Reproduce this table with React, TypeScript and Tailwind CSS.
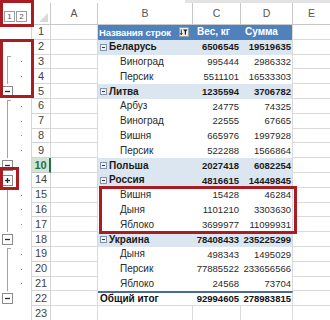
import React from 'react';

type Kind = 'header' | 'group' | 'detail' | 'total' | 'empty';
type OL = 'start' | 'mid' | 'minus' | 'plus' | null;
type Row = { n: number; kind: Kind; label?: string; c?: string; d?: string; ol: OL; dot: boolean };

const rows: Row[] = [
  { n: 1, kind: 'header', label: 'Названия строк', c: 'Вес, кг', d: 'Сумма', ol: null, dot: false },
  { n: 2, kind: 'group', label: 'Беларусь', c: '6506545', d: '19519635', ol: null, dot: false },
  { n: 3, kind: 'detail', label: 'Виноград', c: '995444', d: '2986332', ol: 'start', dot: true },
  { n: 4, kind: 'detail', label: 'Персик', c: '5511101', d: '16533303', ol: 'mid', dot: true },
  { n: 5, kind: 'group', label: 'Литва', c: '1235594', d: '3706782', ol: 'minus', dot: false },
  { n: 6, kind: 'detail', label: 'Арбуз', c: '24775', d: '74325', ol: 'start', dot: true },
  { n: 7, kind: 'detail', label: 'Виноград', c: '22555', d: '67665', ol: 'mid', dot: true },
  { n: 8, kind: 'detail', label: 'Вишня', c: '665976', d: '1997928', ol: 'mid', dot: true },
  { n: 9, kind: 'detail', label: 'Персик', c: '522288', d: '1566864', ol: 'mid', dot: true },
  { n: 10, kind: 'group', label: 'Польша', c: '2027418', d: '6082254', ol: 'minus', dot: false },
  { n: 14, kind: 'group', label: 'Россия', c: '4816615', d: '14449845', ol: 'plus', dot: false },
  { n: 15, kind: 'detail', label: 'Вишня', c: '15428', d: '46284', ol: 'start', dot: true },
  { n: 16, kind: 'detail', label: 'Дыня', c: '1101210', d: '3303630', ol: 'mid', dot: true },
  { n: 17, kind: 'detail', label: 'Яблоко', c: '3699977', d: '11099931', ol: 'mid', dot: true },
  { n: 18, kind: 'group', label: 'Украина', c: '78408433', d: '235225299', ol: 'minus', dot: false },
  { n: 19, kind: 'detail', label: 'Дыня', c: '498343', d: '1495029', ol: 'start', dot: true },
  { n: 20, kind: 'detail', label: 'Персик', c: '77885522', d: '233656566', ol: 'mid', dot: true },
  { n: 21, kind: 'detail', label: 'Яблоко', c: '24568', d: '73704', ol: 'mid', dot: true },
  { n: 22, kind: 'total', label: 'Общий итог', c: '92994605', d: '278983815', ol: 'minus', dot: false },
  { n: 23, kind: 'empty', ol: null, dot: false },
];

function BoxBtn({ plus }: { plus?: boolean }) {
  return (
    <svg width="11" height="11" viewBox="0 0 11 11" className="ml-[2px] shrink-0">
      <rect x="0.5" y="0.5" width="10" height="10" fill="#ffffff" stroke="#8a8a8a" />
      <path d="M3 5.5h5" stroke="#2a2a2a" strokeWidth="1.3" />
      {plus && <path d="M5.5 3v5" stroke="#2a2a2a" strokeWidth="1.3" />}
    </svg>
  );
}

function Outline({ ol, dot }: { ol: OL; dot: boolean }) {
  return (
    <div className="w-[32px] h-full shrink-0 flex border-r border-[#d4d4d4] bg-white">
      <div className="w-[14px] h-full flex items-center">
        {ol === 'start' && <div className="ml-[7px] mt-px w-[4px] self-stretch border-l border-t border-[#a3a3a3]" />}
        {ol === 'mid' && <div className="ml-[7px] w-px self-stretch bg-[#a3a3a3]" />}
        {ol === 'minus' && <BoxBtn />}
        {ol === 'plus' && <BoxBtn plus />}
      </div>
      <div className="flex-1 flex items-center">
        {dot && <div className="ml-[7px] w-px h-px bg-[#8a8a8a]" />}
      </div>
    </div>
  );
}

function GroupIcon() {
  return (
    <svg width="7" height="7" viewBox="0 0 7 7" className="shrink-0">
      <rect x="0.5" y="0.5" width="6" height="6" fill="#eef2f7" stroke="#8593a8" />
      <path d="M2 3.5h3" stroke="#333" strokeWidth="1" />
    </svg>
  );
}

function FilterIcon() {
  return (
    <svg width="10" height="10" viewBox="0 0 10 10" className="ml-auto mr-[4px] shrink-0">
      <rect x="0.5" y="0.5" width="9" height="9" fill="#eeeeee" stroke="#a0a0a0" />
      <path d="M4 2.5h4.5L7 4.5v3.5l-1.2-0.8V4.5z" fill="#222" />
      <path d="M2.3 2.5v5" stroke="#222" strokeWidth="0.9" />
      <path d="M1.2 6.2l1.1 1.6 1.1-1.6" stroke="#222" strokeWidth="0.9" fill="none" />
    </svg>
  );
}

function PivotCells({ r }: { r: Row }) {
  if (r.kind === 'header') {
    return (
      <>
        <div className="w-[95px] shrink-0 bg-[#4f81bd] text-white font-bold text-[9.5px] tracking-[-0.15px] flex items-center pl-[1px] whitespace-nowrap">
          {r.label}
          <FilterIcon />
        </div>
        <div className="w-[48px] shrink-0 bg-[#4f81bd] text-white font-bold text-[10px] flex items-center pl-[4px] whitespace-nowrap">{r.c}</div>
        <div className="w-[52px] shrink-0 bg-[#4f81bd] text-white font-bold text-[10px] flex items-center pl-[4px] whitespace-nowrap border-r border-[#dadada]">{r.d}</div>
      </>
    );
  }
  if (r.kind === 'group') {
    return (
      <>
        <div className="w-[95px] shrink-0 bg-[#dce6f1] text-[#1a1a1a] font-bold text-[10px] flex items-center pl-[2px] gap-[2px] whitespace-nowrap">
          <GroupIcon />
          {r.label}
        </div>
        <div className="w-[48px] shrink-0 bg-[#dce6f1] text-[#1a1a1a] font-bold flex items-center justify-end pr-[2px]">{r.c}</div>
        <div className="w-[52px] shrink-0 bg-[#dce6f1] text-[#1a1a1a] font-bold flex items-center justify-end pr-[1px] border-r border-[#dadada]">{r.d}</div>
      </>
    );
  }
  if (r.kind === 'detail') {
    return (
      <>
        <div className="w-[95px] shrink-0 bg-white text-[#2a2a2a] text-[10px] flex items-center pl-[22px] whitespace-nowrap">{r.label}</div>
        <div className="w-[48px] shrink-0 bg-white text-[#2a2a2a] flex items-center justify-end pr-[2px]">{r.c}</div>
        <div className="w-[52px] shrink-0 bg-white text-[#2a2a2a] flex items-center justify-end pr-[1px] border-r border-[#dadada]">{r.d}</div>
      </>
    );
  }
  if (r.kind === 'total') {
    return (
      <>
        <div className="w-[95px] shrink-0 bg-white text-[#111] font-bold text-[10px] flex items-center pl-[2px] whitespace-nowrap border-t-2 border-b border-t-[#4a6a98] border-b-[#dadada]">{r.label}</div>
        <div className="w-[48px] shrink-0 bg-white text-[#111] font-bold flex items-center justify-end pr-[2px] border-t-2 border-b border-t-[#4a6a98] border-b-[#dadada]">{r.c}</div>
        <div className="w-[52px] shrink-0 bg-white text-[#111] font-bold flex items-center justify-end pr-[1px] border-t-2 border-b border-r border-t-[#4a6a98] border-b-[#dadada] border-r-[#dadada]">{r.d}</div>
      </>
    );
  }
  return (
    <>
      <div className="w-[95px] shrink-0 border-r border-b border-[#dadada]" />
      <div className="w-[48px] shrink-0 border-r border-b border-[#dadada]" />
      <div className="w-[52px] shrink-0 border-r border-b border-[#dadada]" />
    </>
  );
}

function SheetRow({ r }: { r: Row }) {
  const sel = r.n === 10;
  return (
    <div className="flex h-[14.8px] shrink-0">
      <Outline ol={r.ol} dot={r.dot} />
      {sel ? (
        <div className="w-[19px] shrink-0 flex items-center justify-center bg-[#d3e4d7] text-[#217346] font-bold text-[11px] border-b border-[#c6c6c6] border-r-2 border-r-[#217346]">
          {r.n}
        </div>
      ) : (
        <div className="w-[19px] shrink-0 flex items-center justify-center bg-white text-[#444] text-[11px] border-b border-r border-[#d4d4d4]">
          {r.n}
        </div>
      )}
      <div className="w-[47px] shrink-0 border-r border-b border-[#dadada]" />
      <PivotCells r={r} />
      <div className="flex-1 border-b border-[#dadada]" />
    </div>
  );
}

export default function App() {
  return (
    <div className="relative w-[330px] h-[320px] overflow-hidden bg-white flex flex-col font-['Liberation_Sans',Arial,sans-serif] text-[9.5px] leading-none">
      <div className="flex h-[3px] shrink-0">
        <div className="w-[185px] shrink-0" />
        <div className="flex-1 bg-[#e3e3e3]" />
      </div>
      <div className="flex h-[22px] shrink-0 text-[10.5px] text-[#555]">
        <div className="w-[32px] shrink-0 flex items-end pb-[3px] pl-[4px] gap-px border-r border-[#d4d4d4]">
          <div className="w-[11px] h-[11px] border border-[#9c9c9c] flex items-center justify-center text-[8px] text-[#555]">1</div>
          <div className="w-[11px] h-[11px] border border-[#9c9c9c] flex items-center justify-center text-[8px] text-[#555]">2</div>
        </div>
        <div className="w-[19px] shrink-0 flex items-end justify-end border-r border-b border-[#c8c8c8] pr-[2px] pb-[2px]">
          <svg width="9" height="9" viewBox="0 0 9 9">
            <path d="M9 0V9H0Z" fill="#d9d9d9" />
          </svg>
        </div>
        <div className="w-[47px] shrink-0 flex items-center justify-center border-r border-b border-[#c8c8c8]">A</div>
        <div className="w-[95px] shrink-0 flex items-center justify-center border-r border-b border-[#c8c8c8]">B</div>
        <div className="w-[48px] shrink-0 flex items-center justify-center border-r border-b border-[#c8c8c8]">C</div>
        <div className="w-[52px] shrink-0 flex items-center justify-center border-r border-b border-[#c8c8c8]">D</div>
        <div className="flex-1 flex items-center justify-center border-b border-[#c8c8c8]">E</div>
      </div>
      {rows.map((r) => (
        <SheetRow key={r.n} r={r} />
      ))}

      <div className="absolute left-0 top-0 w-[34px] h-[27px] border-[3px] border-[#a81c22]" />
      <div className="absolute left-0 top-[39px] w-[34px] h-[59px] border-[3px] border-[#a81c22]" />
      <div className="absolute left-0 top-[167px] w-[19px] h-[23px] border-[3px] border-[#a81c22]" />
      <div className="absolute left-[99px] top-[186px] w-[198px] h-[48px] border-[3px] border-[#a81c22]" />
    </div>
  );
}
